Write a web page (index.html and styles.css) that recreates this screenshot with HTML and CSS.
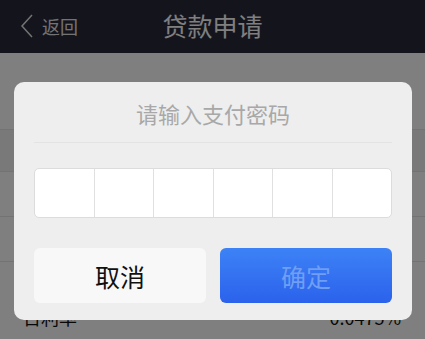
FILE: index.html
```html
<!DOCTYPE html>
<html lang="zh-CN">
<head>
    <meta charset="UTF-8">
    <meta name="viewport" content="width=device-width, initial-scale=1.0">
    <title>贷款申请</title>
    <link rel="stylesheet" href="styles.css">
</head>
<body>
    <div class="header">
        <a class="back">
            <svg width="14" height="24" viewBox="0 0 14 24"><path d="M12 1 L2 12 L12 23" fill="none" stroke="#e6e6e6" stroke-width="1.5"/></svg>
            <span>返回</span>
        </a>
        <h1>贷款申请</h1>
    </div>

    <div class="page">
        <div class="row tall"></div>
        <div class="gap"></div>
        <div class="row"></div>
        <div class="row"></div>
        <div class="item">
            <span>日利率</span>
            <span>0.0475%</span>
        </div>
    </div>

    <div class="overlay">
        <div class="modal">
            <div class="modal-title">请输入支付密码</div>
            <div class="pwd">
                <div class="cell"></div>
                <div class="cell"></div>
                <div class="cell"></div>
                <div class="cell"></div>
                <div class="cell"></div>
                <div class="cell"></div>
            </div>
            <div class="actions">
                <button class="cancel">取消</button>
                <button class="confirm">确定</button>
            </div>
        </div>
    </div>
</body>
</html>
```
FILE: styles.css
```css
body {
    margin: 0;
    width: 425px;
    height: 339px;
    overflow: hidden;
    position: relative;
    background: #fff;
    font-family: "Noto Sans CJK SC", "Noto Sans", sans-serif;
}
.header {
    height: 53px;
    background: #28283a;
    position: relative;
    display: flex;
    align-items: center;
    justify-content: center;
}
.back {
    position: absolute;
    left: 20px;
    top: 13px;
    display: flex;
    align-items: center;
    gap: 8px;
    color: #e6e6e6;
    font-size: 18px;
}
.header h1 {
    margin: 0 0 4px 0;
    font-size: 25px;
    font-weight: normal;
    color: #fff;
}
.row {
    height: 44px;
    border-bottom: 1px solid #e6e6e6;
}
.row.tall {
    height: 76px;
}
.gap {
    height: 41px;
    background: #f2f2f2;
    border-bottom: 1px solid #e6e6e6;
}
.item {
    display: flex;
    justify-content: space-between;
    padding: 45px 24px 0 23px;
    font-size: 18px;
    line-height: 20px;
    color: #111;
}
.overlay {
    position: absolute;
    top: 0;
    left: 0;
    right: 0;
    bottom: 0;
    background: rgba(0, 0, 0, 0.5);
    display: flex;
    justify-content: center;
    align-items: flex-start;
    padding-top: 82px;
}
.modal {
    width: 358px;
    background: #eeeeee;
    border-radius: 10px;
    padding: 0 20px 17px;
    margin-left: 1px;
}
.modal-title {
    height: 60px;
    line-height: 62px;
    text-align: center;
    font-size: 22px;
    color: #a8a8a8;
    border-bottom: 1px solid #e3e3e3;
}
.pwd {
    margin-top: 25px;
    height: 48px;
    display: flex;
    background: #fff;
    border: 1px solid #dcdcdc;
    border-radius: 5px;
}
.cell {
    flex: 1;
    border-left: 1px solid #e0e0e0;
}
.cell:first-child {
    border-left: none;
}
.actions {
    margin-top: 30px;
    display: flex;
    gap: 14px;
}
.actions button {
    flex: 1;
    height: 55px;
    border: none;
    border-radius: 6px;
    font-family: inherit;
    font-size: 25px;
    padding: 0;
}
.cancel {
    background: #f8f8f8;
    color: #111;
}
.confirm {
    background: linear-gradient(#3d82f6, #2b62ec);
    color: #6f9ef3;
}
```
